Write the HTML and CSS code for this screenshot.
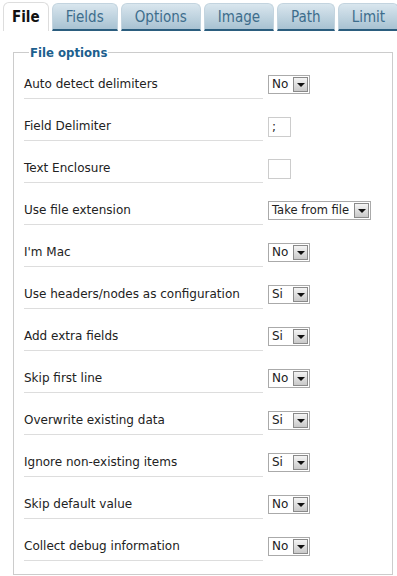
FILE: index.html
```html
<!DOCTYPE html>
<html lang="en">
<head>
  <meta charset="UTF-8" />
  <title>Import options</title>
  <link rel="stylesheet" href="styles.css">
</head>
<body>
  <div class="tabs">
    <div class="tab active">File</div>
    <div class="tab">Fields</div>
    <div class="tab">Options</div>
    <div class="tab">Image</div>
    <div class="tab">Path</div>
    <div class="tab">Limit</div>
    <div class="tab-rest"></div>
  </div>

  <fieldset class="options">
    <legend>File options</legend>

    <div class="row">
      <div class="label">Auto detect delimiters</div>
      <span class="select"><span class="value">No</span><span class="arrow"></span></span>
    </div>
    <div class="row">
      <div class="label">Field Delimiter</div>
      <span class="input">;</span>
    </div>
    <div class="row">
      <div class="label">Text Enclosure</div>
      <span class="input"></span>
    </div>
    <div class="row">
      <div class="label">Use file extension</div>
      <span class="select wide"><span class="value">Take from file</span><span class="arrow"></span></span>
    </div>
    <div class="row">
      <div class="label">I'm Mac</div>
      <span class="select"><span class="value">No</span><span class="arrow"></span></span>
    </div>
    <div class="row">
      <div class="label">Use headers/nodes as configuration</div>
      <span class="select"><span class="value">Si</span><span class="arrow"></span></span>
    </div>
    <div class="row">
      <div class="label">Add extra fields</div>
      <span class="select"><span class="value">Si</span><span class="arrow"></span></span>
    </div>
    <div class="row">
      <div class="label">Skip first line</div>
      <span class="select"><span class="value">No</span><span class="arrow"></span></span>
    </div>
    <div class="row">
      <div class="label">Overwrite existing data</div>
      <span class="select"><span class="value">Si</span><span class="arrow"></span></span>
    </div>
    <div class="row">
      <div class="label">Ignore non-existing items</div>
      <span class="select"><span class="value">Si</span><span class="arrow"></span></span>
    </div>
    <div class="row">
      <div class="label">Skip default value</div>
      <span class="select"><span class="value">No</span><span class="arrow"></span></span>
    </div>
    <div class="row">
      <div class="label">Collect debug information</div>
      <span class="select"><span class="value">No</span><span class="arrow"></span></span>
    </div>
  </fieldset>
</body>
</html>
```

FILE: styles.css
```css
* {
  box-sizing: border-box;
}

body {
  margin: 0;
  background: #fff;
  font-family: 'DejaVu Sans', sans-serif;
  color: #222;
  font-size: 12px;
}

/* tab strip */
.tabs {
  display: flex;
  align-items: flex-end;
  height: 31px;
  padding: 2px 0 0 3px;
  gap: 3px;
  font-family: 'DejaVu Sans Condensed', 'DejaVu Sans', sans-serif;
}

.tab {
  height: 28px;
  padding: 0 13px;
  display: flex;
  align-items: center;
  font-size: 15px;
  color: #3d6d8c;
  background: linear-gradient(#d9e6ee, #a8c2d2);
  border: 1px solid #c3d4df;
  border-bottom: 2px solid #2b5d7e;
  border-radius: 6px 6px 0 0;
}

.tab.active {
  height: 29px;
  color: #111;
  font-weight: bold;
  background: #fff;
  border: 1px solid #ddd;
  border-bottom: none;
  padding: 0 8px;
}

.tab-rest {
  flex: 1;
  height: 2px;
  background: #2b5d7e;
  margin-left: -3px;
}

/* fieldset */
.options {
  margin: 14px 4px 0 13px;
  padding: 3px 0 13px 10px;
  border: 1px solid #ccc;
}

.options legend {
  padding: 0 1px;
  margin-left: 5px;
  font-size: 13px;
  font-weight: bold;
  color: #1d5f8e;
  font-family: 'DejaVu Sans Condensed', 'DejaVu Sans', sans-serif;
}

.row {
  display: flex;
  align-items: center;
  margin-top: 13px;
}

.row:first-of-type {
  margin-top: 7px;
}

.label {
  width: 239px;
  padding: 7px 0;
  line-height: 14px;
  border-bottom: 1px solid #ddd;
  margin-right: 5px;
  white-space: nowrap;
}

/* form controls */
.select {
  display: inline-flex;
  align-items: center;
  width: 42px;
  height: 19px;
  border: 1px solid #aaa;
  background: #fff;
  padding: 0 1px 0 3px;
  justify-content: space-between;
}

.select.wide {
  width: 103px;
  font-size: 11.5px;
}

.select .value {
  line-height: 15px;
}

.arrow {
  width: 15px;
  height: 15px;
  background: linear-gradient(#f4f4f4, #c9c9c9);
  border: 1px solid #8a8a8a;
  position: relative;
}

.arrow::after {
  content: "";
  position: absolute;
  left: 3px;
  top: 5px;
  border-left: 4px solid transparent;
  border-right: 4px solid transparent;
  border-top: 4px solid #111;
}

.input {
  display: inline-block;
  width: 23px;
  height: 20px;
  border: 1px solid #ccc;
  padding: 1px 3px;
  line-height: 16px;
}
```
